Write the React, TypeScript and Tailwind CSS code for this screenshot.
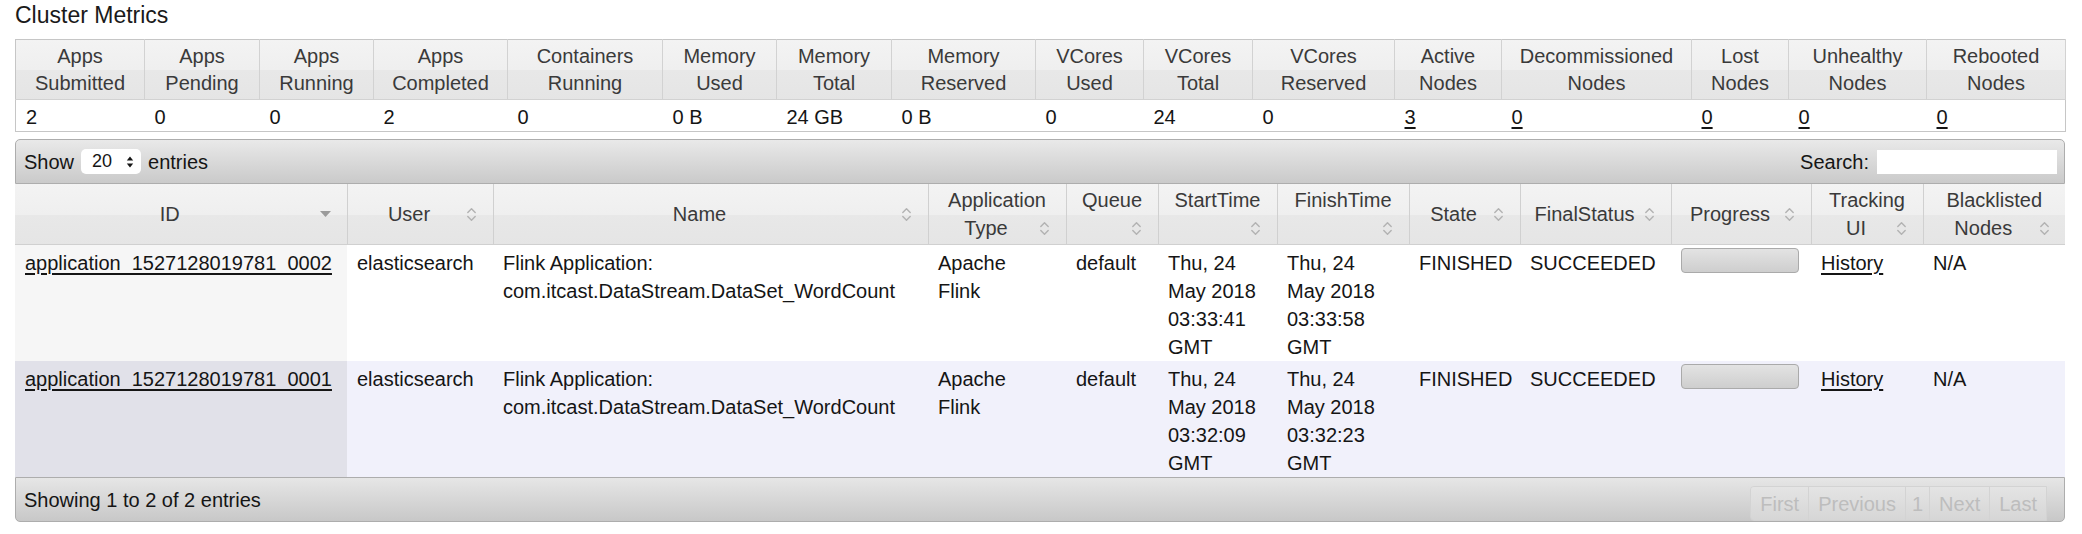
import React from 'react';

type MetricCol = { w: string; top: string; bottom: string; value: string; link?: boolean };

const metricCols: MetricCol[] = [
  { w: 'w-[129px]', top: 'Apps', bottom: 'Submitted', value: '2' },
  { w: 'w-[115px]', top: 'Apps', bottom: 'Pending', value: '0' },
  { w: 'w-[114px]', top: 'Apps', bottom: 'Running', value: '0' },
  { w: 'w-[134px]', top: 'Apps', bottom: 'Completed', value: '2' },
  { w: 'w-[155px]', top: 'Containers', bottom: 'Running', value: '0' },
  { w: 'w-[114px]', top: 'Memory', bottom: 'Used', value: '0 B' },
  { w: 'w-[115px]', top: 'Memory', bottom: 'Total', value: '24 GB' },
  { w: 'w-[144px]', top: 'Memory', bottom: 'Reserved', value: '0 B' },
  { w: 'w-[108px]', top: 'VCores', bottom: 'Used', value: '0' },
  { w: 'w-[109px]', top: 'VCores', bottom: 'Total', value: '24' },
  { w: 'w-[142px]', top: 'VCores', bottom: 'Reserved', value: '0' },
  { w: 'w-[107px]', top: 'Active', bottom: 'Nodes', value: '3', link: true },
  { w: 'w-[190px]', top: 'Decommissioned', bottom: 'Nodes', value: '0', link: true },
  { w: 'w-[97px]', top: 'Lost', bottom: 'Nodes', value: '0', link: true },
  { w: 'w-[138px]', top: 'Unhealthy', bottom: 'Nodes', value: '0', link: true },
  { w: 'w-[139px]', top: 'Rebooted', bottom: 'Nodes', value: '0', link: true },
];

type AppCol = { w: string; lines: string[]; sorted?: boolean };

const appCols: AppCol[] = [
  { w: 'w-[332px]', lines: ['ID'], sorted: true },
  { w: 'w-[146px]', lines: ['User'] },
  { w: 'w-[435px]', lines: ['Name'] },
  { w: 'w-[138px]', lines: ['Application', 'Type'] },
  { w: 'w-[92px]', lines: ['Queue', ''] },
  { w: 'w-[119px]', lines: ['StartTime', ''] },
  { w: 'w-[132px]', lines: ['FinishTime', ''] },
  { w: 'w-[111px]', lines: ['State'] },
  { w: 'w-[151px]', lines: ['FinalStatus'] },
  { w: 'w-[140px]', lines: ['Progress'] },
  { w: 'w-[112px]', lines: ['Tracking', 'UI'] },
  { w: 'w-[142px]', lines: ['Blacklisted', 'Nodes'] },
];

interface AppRow {
  id: string;
  start: string[];
  finish: string[];
}

const apps: AppRow[] = [
  {
    id: 'application_1527128019781_0002',
    start: ['Thu, 24', 'May 2018', '03:33:41', 'GMT'],
    finish: ['Thu, 24', 'May 2018', '03:33:58', 'GMT'],
  },
  {
    id: 'application_1527128019781_0001',
    start: ['Thu, 24', 'May 2018', '03:32:09', 'GMT'],
    finish: ['Thu, 24', 'May 2018', '03:32:23', 'GMT'],
  },
];

const SortBoth = () => (
  <svg width="11" height="15" viewBox="0 0 11 15" fill="none" stroke="#b2b2b2" strokeWidth="1.4" strokeLinecap="round" strokeLinejoin="round">
    <path d="M1.8 5.6 L5.5 1.8 L9.2 5.6" />
    <path d="M1.8 9.4 L5.5 13.2 L9.2 9.4" />
  </svg>
);

const SortDesc = () => (
  <svg width="11" height="6" viewBox="0 0 11 6">
    <path d="M0 0 H11 L5.5 6 Z" fill="#9b9b9b" />
  </svg>
);

const SelectArrows = () => (
  <svg width="8" height="14" viewBox="0 0 8 14">
    <path d="M4 1.5 L7.2 5.6 H0.8 Z M4 12.5 L7.2 8.4 H0.8 Z" fill="#151515" />
  </svg>
);

const glass = 'bg-[linear-gradient(#f3f3f3_0%,#efefef_50%,#e8e8e8_50%,#e5e5e5_100%)]';

const ClusterMetrics: React.FC = () => (
  <table className="mt-[9px] w-[2050px] table-fixed border-collapse border border-[#c6c6c6]">
    <thead>
      <tr className={glass}>
        {metricCols.map((c, i) => (
          <th
            key={i}
            className={`${c.w} border-r border-b border-[#d2d2d2] px-[6px] pt-[3px] pb-[2px] text-center align-middle text-[20px] leading-[27px] font-normal text-[#3a3a3a]`}
          >
            <div>{c.top}</div>
            <div>{c.bottom}</div>
          </th>
        ))}
      </tr>
    </thead>
    <tbody>
      <tr className="bg-white">
        {metricCols.map((c, i) => (
          <td key={i} className="px-[10px] pt-[3px] pb-0 text-left text-[20px] leading-[28px] text-[#151515]">
            {c.link ? <a className="underline underline-offset-[3px]">{c.value}</a> : c.value}
          </td>
        ))}
      </tr>
    </tbody>
  </table>
);

const Toolbar: React.FC = () => (
  <div className="mt-[7px] flex h-[45px] items-center justify-between rounded-t-[5px] border border-[#adadad] bg-gradient-to-b from-[#e9e9e9] to-[#cacaca] pl-[8px] pr-[7px] text-[20px] text-[#151515]">
    <div className="flex items-center">
      <span>Show</span>
      <div className="ml-[7px] flex h-[25px] w-[60px] items-center justify-between rounded-[5px] bg-white pl-[11px] pr-[7px] text-[18px]">
        <span>20</span>
        <SelectArrows />
      </div>
      <span className="ml-[7px]">entries</span>
    </div>
    <div className="flex items-center">
      <span>Search:</span>
      <div className="ml-[8px] h-[24px] w-[180px] bg-white" />
    </div>
  </div>
);

const AppsTable: React.FC = () => (
  <table className="w-[2050px] table-fixed border-collapse">
    <thead>
      <tr className={glass}>
        {appCols.map((c, i) => {
          const last = c.lines[c.lines.length - 1];
          return (
            <th
              key={i}
              className={`${c.w} border-r border-b border-[#d0d0d0] px-[10px] pt-[2px] pb-[2px] align-middle text-[20px] leading-[28px] font-normal text-[#3a3a3a] last:border-r-0`}
            >
              {c.lines.slice(0, -1).map((l, j) => (
                <div key={j} className="text-center">
                  {l}
                </div>
              ))}
              <div className="flex h-[28px] items-center">
                <span className="flex-1 text-center">{last}</span>
                <span className="flex w-[22px] justify-center">{c.sorted ? <SortDesc /> : <SortBoth />}</span>
              </div>
            </th>
          );
        })}
      </tr>
    </thead>
    <tbody>
      {apps.map((a, r) => {
        const odd = r % 2 === 1;
        const base = odd ? 'bg-[#f1f1fb]' : 'bg-white';
        const idBg = odd ? 'bg-[#e1e1e9]' : 'bg-[#f6f6f6]';
        const td = 'px-[10px] pt-[4px] pb-0 align-top text-left text-[20px] leading-[28px] text-[#151515]';
        return (
          <tr key={a.id} className={base}>
            <td className={`${td} ${idBg}`}>
              <a className="underline underline-offset-[3px]">{a.id}</a>
            </td>
            <td className={td}>elasticsearch</td>
            <td className={td}>
              <div>Flink Application:</div>
              <div>com.itcast.DataStream.DataSet_WordCount</div>
            </td>
            <td className={td}>
              <div>Apache</div>
              <div>Flink</div>
            </td>
            <td className={td}>default</td>
            <td className={td}>
              {a.start.map((l) => (
                <div key={l}>{l}</div>
              ))}
            </td>
            <td className={td}>
              {a.finish.map((l) => (
                <div key={l}>{l}</div>
              ))}
            </td>
            <td className={td}>FINISHED</td>
            <td className={td}>SUCCEEDED</td>
            <td className={td}>
              <div className="mt-[-1px] h-[25px] w-[118px] rounded-[4px] border border-[#aaaaaa] bg-gradient-to-b from-[#e3e3e3] to-[#cecece]" />
            </td>
            <td className={td}>
              <a className="underline underline-offset-[3px]">History</a>
            </td>
            <td className={td}>N/A</td>
          </tr>
        );
      })}
    </tbody>
  </table>
);

const pages = ['First', 'Previous', '1', 'Next', 'Last'];

const Footer: React.FC = () => (
  <div className="flex h-[45px] items-center justify-between rounded-b-[5px] border border-[#adadad] bg-gradient-to-b from-[#e6e6e6] to-[#c8c8c8] pl-[8px] pr-[17px] text-[20px] text-[#151515]">
    <span>Showing 1 to 2 of 2 entries</span>
    <div className="mt-[8px] flex h-[35px] items-stretch self-start overflow-hidden rounded-l-[4px] border border-[#d3d3d3] text-[20px] text-[#bdbdbd]">
      {pages.map((p, i) => (
        <span
          key={p}
          className={`flex items-center bg-gradient-to-b from-[#e4e4e4] to-[#d6d6d6] ${p === '1' ? 'px-[6px]' : 'px-[9px]'} ${i > 0 ? 'border-l border-[#d3d3d3]' : ''}`}
        >
          {p}
        </span>
      ))}
    </div>
  </div>
);

export default function App() {
  return (
    <div className="h-[534px] w-[2082px] bg-white pl-[15px] pr-[17px] font-['Liberation_Sans',Arial,sans-serif]">
      <h1 className="text-[23px] leading-[30px] font-normal text-[#1a1a1a]">Cluster Metrics</h1>
      <ClusterMetrics />
      <Toolbar />
      <AppsTable />
      <Footer />
    </div>
  );
}
